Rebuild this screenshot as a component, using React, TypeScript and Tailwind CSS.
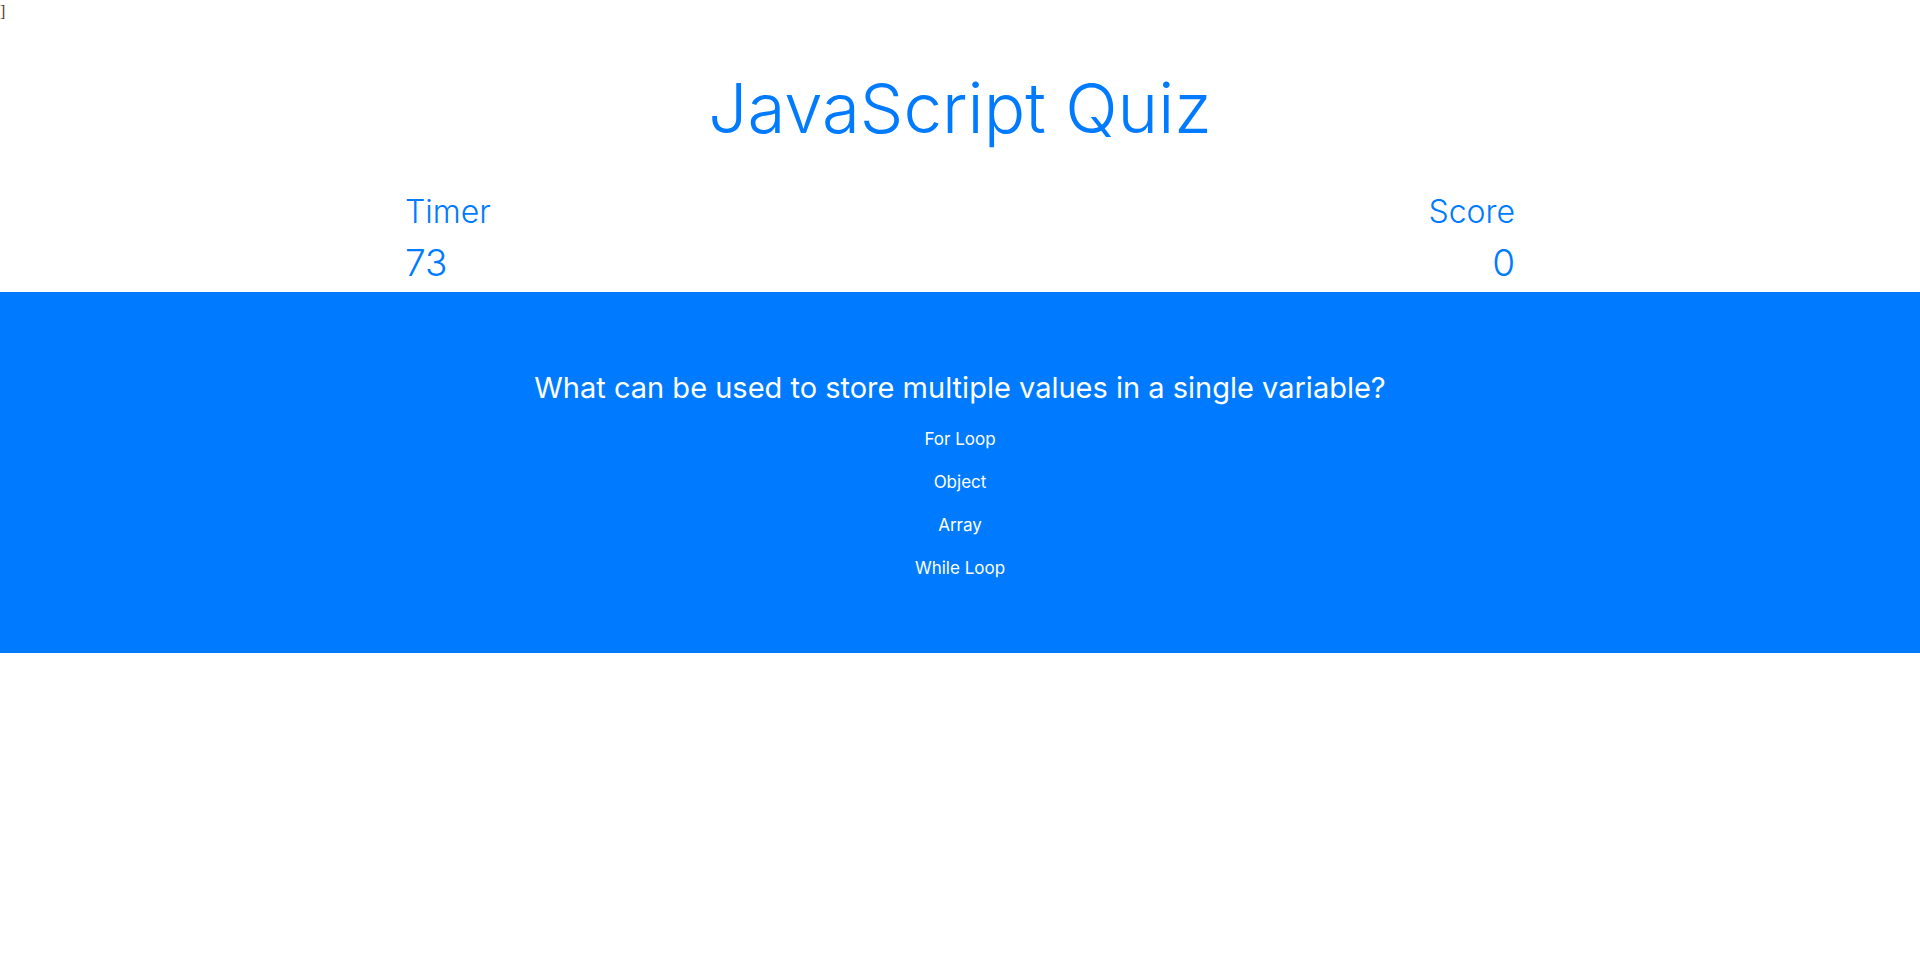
const answers = ["For Loop", "Object", "Array", "While Loop"];

function Stat({ label, value, align }: { label: string; value: number; align: "left" | "right" }) {
  return (
    <div className={align === "right" ? "text-right" : "text-left"}>
      <h2 className="text-[32px] leading-[1.2] font-light">{label}</h2>
      <p className="mt-[10px] text-[37px] leading-[1.2] font-light">{value}</p>
    </div>
  );
}

export default function App() {
  return (
    <div className="min-h-[975px] bg-white font-['Inter',sans-serif]">
      <div className="font-['Liberation_Serif',serif] text-base leading-6 text-[#4a3f1c]">]</div>

      <h1 className="mt-[43px] text-center text-[69px] leading-[1.2] font-light text-[#007bff]">
        JavaScript Quiz
      </h1>

      <div className="mx-auto mt-[43px] flex max-w-[1140px] justify-between px-[15px] text-[#007bff]">
        <Stat label="Timer" value={73} align="left" />
        <Stat label="Score" value={0} align="right" />
      </div>

      <section className="mt-[6px] flex h-[361px] flex-col items-center bg-[#007bff] pt-[79px] text-white">
        <h2 className="text-[29px] leading-[1.2] font-normal">
          What can be used to store multiple values in a single variable?
        </h2>
        <div className="mt-[15px] flex flex-col items-center gap-[5px]">
          {answers.map((a) => (
            <button
              key={a}
              className="border border-transparent px-3 py-1.5 text-[17px] leading-6 font-normal text-white"
            >
              {a}
            </button>
          ))}
        </div>
      </section>
    </div>
  );
}
